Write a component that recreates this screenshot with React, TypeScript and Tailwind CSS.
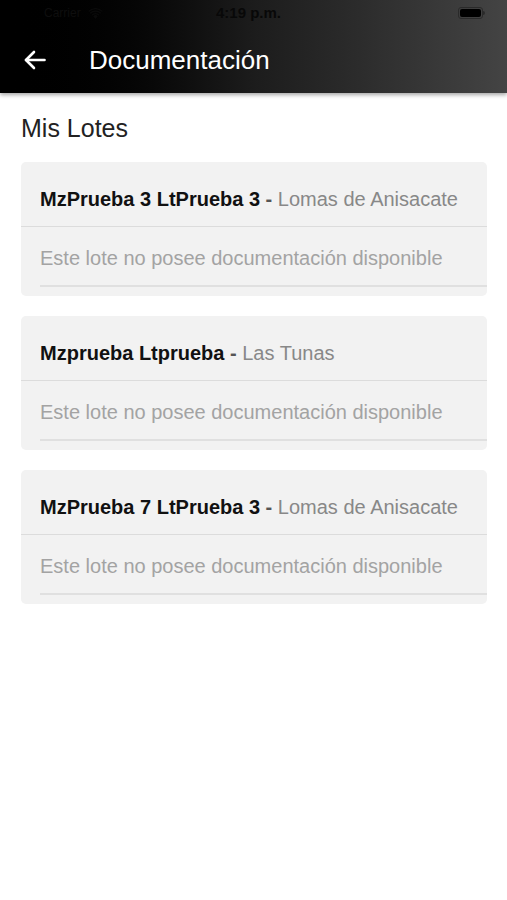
const lotes = [
  { nombre: 'MzPrueba 3 LtPrueba 3', barrio: 'Lomas de Anisacate' },
  { nombre: 'Mzprueba Ltprueba', barrio: 'Las Tunas' },
  { nombre: 'MzPrueba 7 LtPrueba 3', barrio: 'Lomas de Anisacate' },
];

function LoteCard({ nombre, barrio }: { nombre: string; barrio: string }) {
  return (
    <div className="rounded-[5px] bg-[#f2f2f2]">
      <div className="h-[64px] pl-[19px] pt-[26px] text-[20px] leading-[22px] whitespace-nowrap">
        <span className="font-bold text-[#111]">{nombre}</span>
        <span className="font-bold text-[#555]"> - </span>
        <span className="text-[#888]">{barrio}</span>
      </div>
      <div className="h-px bg-[#dcdcdc]" />
      <div className="pl-[19px] pb-[9px]">
        <p className="pt-[20px] pb-[16px] text-[20px] leading-[22px] text-[#a3a3a3] whitespace-nowrap">
          Este lote no posee documentación disponible
        </p>
        <div className="h-[2px] bg-[#e0e0e0]" />
      </div>
    </div>
  );
}

export default function App() {
  return (
    <div className="w-[507px] h-[900px] bg-white font-['Liberation_Sans',Arial,sans-serif] overflow-hidden">

      {/* Header with status bar */}
      <div className="relative z-10 h-[93px] bg-gradient-to-r from-[#000] via-[#1c1c1c] to-[#444] shadow-[0_2px_4px_rgba(0,0,0,0.35)]">
        <div className="h-[26px] flex items-center px-[20px] text-[#080808] text-[15px] font-semibold">
          <div className="flex items-center gap-[7px] w-[150px]">
            <span className="text-[12px] font-normal text-[#0e0e0e] pl-[24px]">Carrier</span>
            <svg width="15" height="11" viewBox="0 0 16 12" fill="#0a0a0a">
              <path d="M8 12 L5.5 9 A3.5 3.5 0 0 1 10.5 9 Z" />
              <path d="M3.8 7.3 A6 6 0 0 1 12.2 7.3 L11.2 8.3 A4.6 4.6 0 0 0 4.8 8.3 Z" />
              <path d="M1.8 5.2 A9 9 0 0 1 14.2 5.2 L13.2 6.2 A7.6 7.6 0 0 0 2.8 6.2 Z" />
              <path d="M0 3.2 A11.5 11.5 0 0 1 16 3.2 L15 4.2 A10.2 10.2 0 0 0 1 4.2 Z" />
            </svg>
          </div>
          <span className="flex-1 text-center pr-[10px]">4:19 p.m.</span>
          <div className="w-[150px] flex justify-end pr-[2px]">
            <div className="flex items-center">
              <div className="w-[25px] h-[12px] rounded-[3px] border border-[#2a2a2a] p-[1px]">
                <div className="w-full h-full rounded-[2px] bg-black" />
              </div>
              <div className="w-[2px] h-[4px] bg-[#2a2a2a] rounded-r-sm" />
            </div>
          </div>
        </div>
        <div className="h-[67px] flex items-center pl-[24px]">
          <svg width="22" height="20" viewBox="0 0 22 20" fill="none" stroke="white" strokeWidth="2.6" strokeLinecap="round" strokeLinejoin="round">
            <path d="M20.5 10 H2" />
            <path d="M10 2 L2 10 L10 18" />
          </svg>
          <h1 className="ml-[43px] text-white text-[26px] leading-none">Documentación</h1>
        </div>
      </div>

      {/* Content */}
      <div className="px-[20px] pt-[22px]">
        <h2 className="pl-[1px] text-[25px] leading-[26px] text-[#222]">Mis Lotes</h2>
        <div className="mt-[21px] pl-px flex flex-col gap-[20px]">
          {lotes.map((l, i) => (
            <LoteCard key={i} nombre={l.nombre} barrio={l.barrio} />
          ))}
        </div>
      </div>

    </div>
  );
}
